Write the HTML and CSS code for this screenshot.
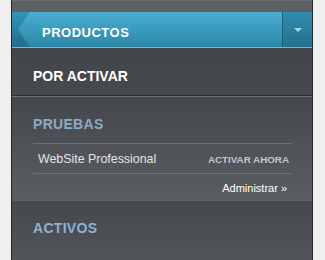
FILE: index.html
```html
<!DOCTYPE html>
<html lang="es">
<head>
  <meta charset="UTF-8">
  <title>Productos</title>
  <link rel="stylesheet" href="styles.css">
</head>
<body>
  <div class="panel">
    <div class="top-strip"></div>
    <header class="bar">
      <div class="tab">PRODUCTOS</div>
      <button class="drop" aria-label="Menu"><span class="caret"></span></button>
    </header>
    <section class="sec sec-pending">
      <h2 class="title">POR ACTIVAR</h2>
    </section>
    <section class="sec sec-trials">
      <h3 class="subtitle">PRUEBAS</h3>
      <div class="row">
        <span class="name">WebSite Professional</span>
        <a class="action" href="#">ACTIVAR AHORA</a>
      </div>
      <div class="manage"><a href="#">Administrar &raquo;</a></div>
    </section>
    <section class="sec sec-active">
      <h3 class="subtitle">ACTIVOS</h3>
    </section>
  </div>
</body>
</html>
```

FILE: styles.css
```css
* { box-sizing: border-box; margin: 0; padding: 0; }
html, body { height: 100%; }
body {
  background: #efefef;
  font-family: 'Liberation Sans', Arial, sans-serif;
  overflow: hidden;
}
.panel {
  width: 302px;
  height: 100%;
  margin-left: 11px;
  border-left: 1px solid #26282a;
  border-right: 1px solid #26282a;
  display: flex;
  flex-direction: column;
}
.top-strip {
  height: 12px;
  background: #5c5f63;
  border-top: 1px solid #6b6e72;
}
.bar {
  display: flex;
  height: 36px;
  border-bottom: 1px solid #5cc3e6;
  background: linear-gradient(#3394b5, #1f6e8b);
}
.tab {
  flex: 1;
  margin-left: 6px;
  padding: 5px 0 0 24px;
  display: flex;
  align-items: center;
  color: #fff;
  font-weight: 700;
  font-size: 13px;
  letter-spacing: 0.5px;
  background: linear-gradient(#4aaed3, #2b87a7);
  clip-path: polygon(12px 0, 100% 0, 100% 100%, 12px 100%, 0 50%);
}
.drop {
  width: 30px;
  border: none;
  border-left: 1px solid #1d6079;
  background: linear-gradient(#2f8db0, #24718e);
  display: flex;
  align-items: center;
  justify-content: center;
  cursor: pointer;
}
.caret {
  width: 0;
  height: 0;
  border-left: 4px solid transparent;
  border-right: 4px solid transparent;
  border-top: 4px solid #a9d3e3;
  margin-left: 1px;
}
.sec { color: #fff; }
.title, .subtitle {
  font-weight: 700;
  font-size: 14px;
  line-height: 20px;
  padding-left: 21px;
}
.sec-pending {
  height: 48px;
  padding-top: 18px;
  background: linear-gradient(#414448, #46494d);
  border-bottom: 1px solid #2c2e31;
}
.sec-trials {
  padding-top: 17px;
  border-top: 1px solid #6e7175;
  background: linear-gradient(#44474b, #5a5d61);
}
.subtitle { color: #8aabc6; letter-spacing: 0.3px; }
.sec-trials .subtitle { margin-bottom: 9px; }
.row {
  margin: 0 20px 0 21px;
  height: 31px;
  border-top: 1px solid #6d7074;
  border-bottom: 1px solid #6d7074;
  display: flex;
  align-items: center;
  justify-content: space-between;
  padding: 1px 3px 0 5px;
}
.name {
  font-size: 12.4px;
  color: #e4e5e6;
}
.action {
  font-size: 9.8px;
  font-weight: 700;
  color: #c4c7ca;
  text-decoration: none;
}
.manage {
  height: 27px;
  display: flex;
  align-items: center;
  justify-content: flex-end;
  padding-right: 25px;
}
.manage a {
  font-size: 11px;
  color: #fff;
  text-decoration: none;
}
.sec-active {
  flex: 1;
  padding-top: 17px;
  background: linear-gradient(#45484c, #515458 60px);
}
.sec-active .subtitle { color: #8fb2d1; }
```
